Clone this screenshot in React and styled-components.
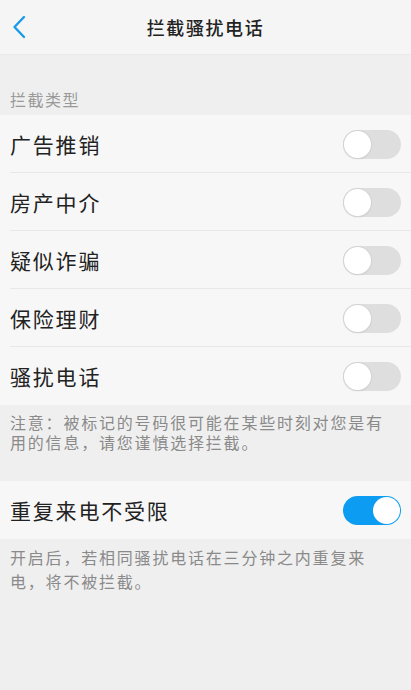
import React, { useState } from "react";
import styled, { createGlobalStyle } from "styled-components";

const GlobalStyle = createGlobalStyle`
  html, body { margin: 0; padding: 0; background: #efefef; }
  body { font-family: "Noto Sans CJK SC", "Noto Sans", sans-serif; }
  * { box-sizing: border-box; }
`;

const Page = styled.div`
  width: 411px;
  min-height: 690px;
  background: #efefef;
  display: flex;
  flex-direction: column;
`;

const Header = styled.header`
  height: 55px;
  background: #f5f5f5;
  border-bottom: 1px solid #e9e9e9;
  display: grid;
  grid-template-columns: 60px 1fr 60px;
  align-items: center;
`;

const BackButton = styled.button`
  border: none;
  background: none;
  padding: 0 0 0 12px;
  height: 100%;
  display: flex;
  align-items: center;
  cursor: pointer;
`;

const Title = styled.h1`
  margin: 0;
  text-align: center;
  font-size: 18px;
  font-weight: 500;
  letter-spacing: 1.6px;
  color: #222;
`;

const SectionLabel = styled.div`
  padding: 34px 10px 6px;
  font-size: 16px;
  line-height: 20px;
  letter-spacing: 1.5px;
  color: #999;
`;

const Group = styled.div`
  background: #f7f7f7;
`;

const Row = styled.div`
  position: relative;
  height: 58px;
  padding: 0 10px;
  display: flex;
  align-items: center;
  justify-content: space-between;
  &::after {
    content: "";
    display: ${(p) => (p.$last ? "none" : "block")};
    position: absolute;
    left: 10px;
    right: 0;
    bottom: 0;
    height: 1px;
    background: #e8e8e8;
  }
`;

const Label = styled.span`
  font-size: 21px;
  letter-spacing: 1.8px;
  color: #222;
`;

const Track = styled.button`
  position: relative;
  width: 58px;
  height: 29px;
  border-radius: 15px;
  border: none;
  padding: 0;
  background: ${(p) => (p.$on ? "#0c9cf2" : "#dedede")};
  cursor: pointer;
  flex-shrink: 0;
`;

const Thumb = styled.span`
  position: absolute;
  top: 1px;
  left: ${(p) => (p.$on ? "30px" : "1px")};
  width: 27px;
  height: 27px;
  border-radius: 50%;
  background: #fff;
  box-shadow: ${(p) => (p.$on ? "none" : "0 0 0 1px #d4d4d4, 0 1px 2px rgba(0,0,0,0.12)")};
`;

const Note = styled.p`
  margin: 0;
  padding: ${(p) => p.$pad};
  font-size: 16px;
  line-height: ${(p) => p.$lh};
  letter-spacing: 1.8px;
  color: #8a8a8a;
`;

function Toggle({ on, onClick }) {
  return (
    <Track $on={on} onClick={onClick}>
      <Thumb $on={on} />
    </Track>
  );
}

const types = ["广告推销", "房产中介", "疑似诈骗", "保险理财", "骚扰电话"];

export default function App() {
  const [state, setState] = useState(types.map(() => false));
  const [repeat, setRepeat] = useState(true);

  return (
    <>
      <GlobalStyle />
      <Page>
        <Header>
          <BackButton aria-label="返回">
            <svg width="14" height="24" viewBox="0 0 14 24">
              <path d="M12 2 L2.5 12 L12 22" fill="none" stroke="#1a9be8" strokeWidth="2.4" strokeLinecap="round" strokeLinejoin="round" />
            </svg>
          </BackButton>
          <Title>拦截骚扰电话</Title>
          <span />
        </Header>

        <SectionLabel>拦截类型</SectionLabel>
        <Group>
          {types.map((t, i) => (
            <Row key={t} $last={i === types.length - 1}>
              <Label>{t}</Label>
              <Toggle
                on={state[i]}
                onClick={() => setState((s) => s.map((v, j) => (j === i ? !v : v)))}
              />
            </Row>
          ))}
        </Group>
        <Note $pad="7px 10px 29px" $lh="20px">
          注意：被标记的号码很可能在某些时刻对您是有用的信息，请您谨慎选择拦截。
        </Note>

        <Group>
          <Row $last>
            <Label>重复来电不受限</Label>
            <Toggle on={repeat} onClick={() => setRepeat((r) => !r)} />
          </Row>
        </Group>
        <Note $pad="6px 10px 20px" $lh="24px">
          开启后，若相同骚扰电话在三分钟之内重复来电，将不被拦截。
        </Note>
      </Page>
    </>
  );
}
